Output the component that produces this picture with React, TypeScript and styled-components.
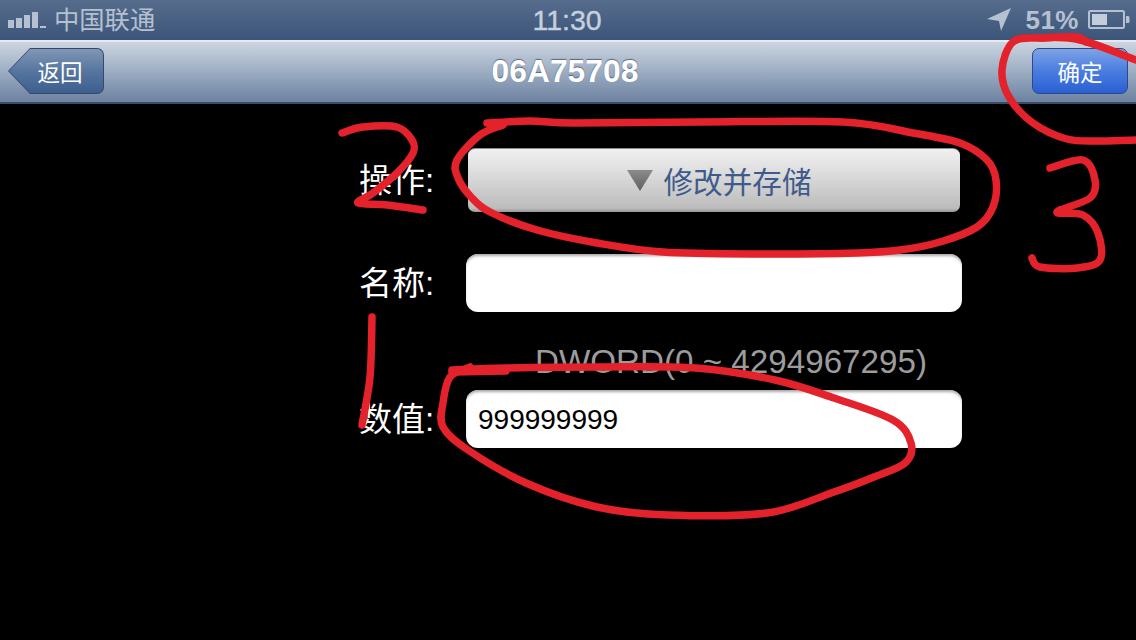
import React from "react";
import styled, { createGlobalStyle } from "styled-components";

const Global = createGlobalStyle`
  html, body { margin: 0; padding: 0; background: #000; }
  #root { width: 1136px; height: 640px; overflow: hidden; }
`;

const CJK = `"Liberation Sans", "Noto Sans CJK SC", sans-serif`;

const Screen = styled.div`
  position: relative;
  width: 1136px;
  height: 640px;
  background: #000;
  overflow: hidden;
  font-family: ${CJK};
`;

const StatusBar = styled.div`
  height: 40px;
  box-sizing: border-box;
  padding: 0 6px 0 8px;
  display: grid;
  grid-template-columns: 1fr auto 1fr;
  align-items: center;
  background: linear-gradient(#566c8c, #3b5579);
  color: #b5c0d1;
`;

const StatusLeft = styled.div`
  display: flex;
  align-items: center;
  gap: 8px;
`;

const StatusRight = styled.div`
  display: flex;
  align-items: center;
  justify-content: flex-end;
  gap: 9px;
`;

const Carrier = styled.span`
  font-size: 25.3px;
  line-height: 40px;
`;

const Clock = styled.span`
  margin-right: 4px;
  font-size: 28.5px;
  font-weight: 400;
  line-height: 40px;
  color: #c6d0de;
  -webkit-text-stroke: 0.4px #c6d0de;
`;

const Percent = styled.span`
  font-size: 26px;
  font-weight: 700;
  letter-spacing: 0.5px;
  line-height: 40px;
  margin-left: 5px;
`;

const NavBar = styled.div`
  height: 64px;
  box-sizing: border-box;
  padding: 0 8px 2px;
  display: grid;
  grid-template-columns: 1fr auto 1fr;
  align-items: center;
  border-top: 2px solid #e6ebf1;
  border-bottom: 2px solid #3b4c66;
  background: linear-gradient(#ccd5e1, #9eaec3 48%, #6c82a1);
`;

const Title = styled.div`
  margin-right: 6px;
  font-size: 31.8px;
  font-weight: 700;
  color: #fff;
  text-shadow: 0 -1px 1px #54667f;
`;

const BackButton = styled.button`
  position: relative;
  justify-self: start;
  width: 96px;
  height: 46px;
  margin: 0;
  padding: 0 0 0 8px;
  border: 0;
  border-radius: 0 7px 7px 0;
  background: #34496b;
  clip-path: polygon(22px 0, 100% 0, 100% 100%, 22px 100%, 0 50%);
  font-family: ${CJK};
  font-size: 22.5px;
  color: #fff;
  &::before {
    content: "";
    position: absolute;
    inset: 1px;
    border-radius: 0 6px 6px 0;
    background: linear-gradient(#8197b5, #56759f 50%, #3d5f8e);
    clip-path: polygon(21px 0, 100% 0, 100% 100%, 21px 100%, 0 50%);
  }
  & > span {
    position: relative;
  }
`;

const DoneButton = styled.button`
  justify-self: end;
  width: 96px;
  height: 46px;
  margin: 0;
  padding: 0;
  border: 1px solid #2c4a86;
  border-radius: 7px;
  background: linear-gradient(#7ea3e6, #4a7de0 50%, #2a5fd3);
  font-family: ${CJK};
  font-size: 22.5px;
  color: #fff;
`;

const Form = styled.div`
  width: 604px;
  margin-left: 358px;
  padding-top: 44px;
  display: flex;
  flex-direction: column;
`;

const Row = styled.div`
  display: grid;
  grid-template-columns: 108px 496px;
  align-items: center;
`;

const Label = styled.label`
  padding: 2px 0 0 1px;
  font-size: 33px;
  line-height: 40px;
  color: #fff;
  white-space: nowrap;
`;

const SelectButton = styled.button`
  width: 492px;
  height: 64px;
  margin: 0 0 0 2px;
  padding: 0 0 0 10px;
  border: 0;
  border-top: 1px solid #8d8d8d;
  border-radius: 7px;
  display: flex;
  align-items: center;
  justify-content: center;
  gap: 11px;
  background: linear-gradient(#f0f0f0, #dedede 35%, #bcbcbc 94%, #969696);
  font-family: ${CJK};
  font-size: 29.6px;
  color: #3f5b8c;
`;

const TextField = styled.input`
  width: 496px;
  height: 58px;
  box-sizing: border-box;
  margin: 0;
  padding: 2px 12px 0;
  border: 0;
  border-radius: 12px;
  outline: 0;
  background: #fff;
  box-shadow: inset 0 3px 3px -1px #a8a8a8;
  font-family: ${CJK};
  font-size: 28px;
  color: #000;
`;

const NameRow = styled(Row)`
  margin-top: 42px;
`;

const Hint = styled.div`
  height: 78px;
  box-sizing: border-box;
  padding: 31px 0 0 177px;
  font-size: 33.2px;
  line-height: 38px;
  color: #9c9c9c;
  white-space: nowrap;
`;

const InkLayer = styled.svg`
  position: absolute;
  left: 0;
  top: 0;
  pointer-events: none;
`;

const InkStroke = styled.path`
  fill: none;
  stroke: #e4222b;
  stroke-width: 7.5px;
  stroke-linecap: round;
  stroke-linejoin: round;
`;

type P = [number, number];

const smooth = (pts: P[]) => {
  let d = `M${pts[0][0]} ${pts[0][1]}`;
  for (let i = 0; i < pts.length - 1; i++) {
    const p0 = pts[Math.max(i - 1, 0)];
    const p1 = pts[i];
    const p2 = pts[i + 1];
    const p3 = pts[Math.min(i + 2, pts.length - 1)];
    const c1x = p1[0] + (p2[0] - p0[0]) / 6;
    const c1y = p1[1] + (p2[1] - p0[1]) / 6;
    const c2x = p2[0] - (p3[0] - p1[0]) / 6;
    const c2y = p2[1] - (p3[1] - p1[1]) / 6;
    d += ` C${c1x} ${c1y} ${c2x} ${c2y} ${p2[0]} ${p2[1]}`;
  }
  return d;
};

const strokes: P[][] = [
  // circle round the confirm button
  [[1136, 60], [1080, 40], [1040, 38], [1013, 42], [1002, 70], [1009, 97], [1033, 123], [1067, 139], [1100, 141], [1136, 140]],
  [[1040, 38], [1076, 37], [1086, 42]],
  // oval round the action select
  [[487, 123], [530, 121], [575, 123], [700, 122], [843, 122], [913, 133], [960, 143], [987, 160], [996, 180], [993, 207], [977, 227], [940, 242], [900, 250], [857, 253], [760, 254], [663, 252], [597, 243], [537, 230], [492, 213], [472, 198], [458, 178], [457, 160], [480, 135], [503, 125]],
  // digit 2
  [[342, 133], [363, 127], [397, 127], [412, 140], [413, 153], [397, 173], [373, 193], [358, 203], [387, 205], [423, 210]],
  // digit 3
  [[1050, 168], [1083, 160], [1095, 180], [1090, 198], [1057, 212], [1083, 215], [1098, 233], [1100, 260], [1077, 268], [1040, 267], [1032, 258]],
  // digit 1
  [[372, 317], [370, 377], [362, 425]],
  // oval round the value field
  [[452, 370], [506, 368], [600, 367], [696, 368], [775, 380], [834, 398], [893, 420], [911, 443], [905, 463], [874, 477], [834, 492], [767, 513], [668, 515], [597, 507], [526, 483], [468, 450], [443, 427], [443, 403], [450, 377], [470, 367]],
  [[452, 372], [506, 371]],
];

const SignalIcon = () => (
  <svg width="38" height="20" viewBox="0 0 38 20" fill="#b5c0d1">
    <rect x="0" y="10" width="6" height="8" />
    <rect x="8" y="8" width="6" height="10" />
    <rect x="16" y="5" width="6" height="13" />
    <rect x="24" y="2" width="6" height="16" />
    <rect x="32" y="16" width="6" height="2" />
  </svg>
);

const ArrowIcon = () => (
  <svg width="24" height="24" viewBox="0 0 24 24" fill="#b5c0d1">
    <path d="M0 11 L24 0 L14 23 L12 13 Z" />
  </svg>
);

const BatteryIcon = () => (
  <svg width="42" height="20" viewBox="0 0 42 20">
    <rect x="1" y="1" width="35" height="17" rx="1.5" fill="none" stroke="#b5c0d1" strokeWidth="2" />
    <rect x="4" y="4" width="15" height="11" fill="#c3cddb" />
    <path d="M38 6 h2 a1.5 1.5 0 0 1 1.5 1.5 v4 a1.5 1.5 0 0 1 -1.5 1.5 h-2 z" fill="#b5c0d1" />
  </svg>
);

const TriangleIcon = () => (
  <svg width="26" height="21" viewBox="0 0 26 21">
    <defs>
      <linearGradient id="tri" x1="0" y1="0" x2="0" y2="1">
        <stop offset="0" stopColor="#8c8c8c" />
        <stop offset="1" stopColor="#5f5f5f" />
      </linearGradient>
    </defs>
    <path d="M0 0 H26 L13 21 Z" fill="url(#tri)" />
  </svg>
);

export default function App() {
  return (
    <Screen>
      <Global />
      <StatusBar>
        <StatusLeft>
          <SignalIcon />
          <Carrier>中国联通</Carrier>
        </StatusLeft>
        <Clock>11:30</Clock>
        <StatusRight>
          <ArrowIcon />
          <Percent>51%</Percent>
          <BatteryIcon />
        </StatusRight>
      </StatusBar>
      <NavBar>
        <BackButton>
          <span>返回</span>
        </BackButton>
        <Title>06A75708</Title>
        <DoneButton>确定</DoneButton>
      </NavBar>
      <Form>
        <Row>
          <Label>操作:</Label>
          <SelectButton>
            <TriangleIcon />
            修改并存储
          </SelectButton>
        </Row>
        <NameRow>
          <Label>名称:</Label>
          <TextField readOnly defaultValue="" />
        </NameRow>
        <Hint>DWORD(0 ~ 4294967295)</Hint>
        <Row>
          <Label>数值:</Label>
          <TextField readOnly defaultValue="999999999" />
        </Row>
      </Form>
      <InkLayer width="1136" height="640" viewBox="0 0 1136 640">
        {strokes.map((s, i) => (
          <InkStroke key={i} d={smooth(s)} />
        ))}
      </InkLayer>
    </Screen>
  );
}
